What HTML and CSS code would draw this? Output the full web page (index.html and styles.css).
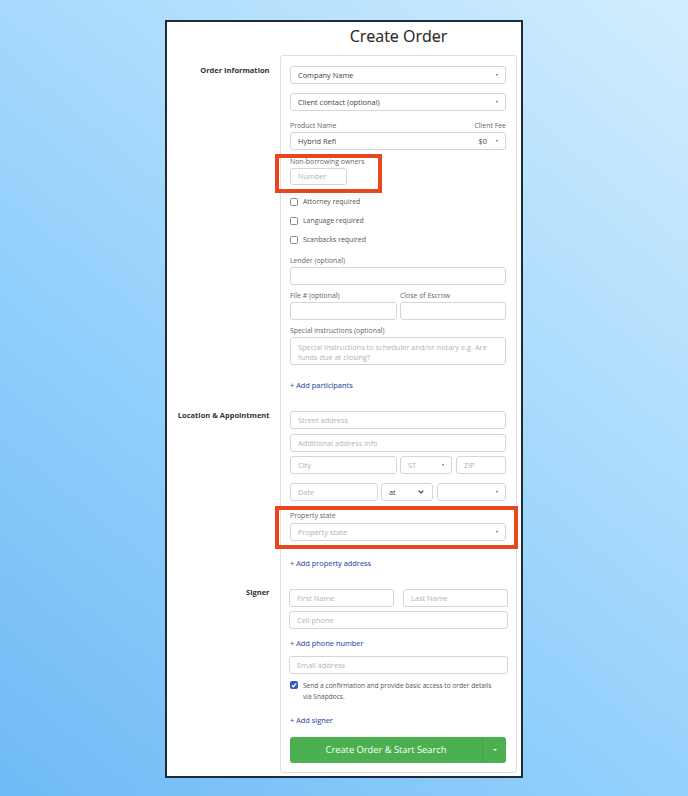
FILE: index.html
```html
<!DOCTYPE html>
<html lang="en">
<head>
<meta charset="utf-8">
<title>Create Order</title>
<link rel="stylesheet" href="styles.css">
</head>
<body>
<div class="frame">
  <div class="title">Create Order</div>
  <div class="layout">
    <div class="side">
      <div class="side-label l1">Order Information</div>
      <div class="side-label l2">Location &amp; Appointment</div>
      <div class="side-label l3">Signer</div>
    </div>
    <div class="card">
      <div class="ctl sel"><span>Company Name</span><i class="caret"></i></div>
      <div class="ctl sel m9"><span>Client contact (optional)</span><i class="caret"></i></div>
      <div class="lbl-row m10"><span class="lbl-txt">Product Name</span><span class="lbl-txt">Client Fee</span></div>
      <div class="ctl sel m1"><span>Hybrid Refi</span><span class="fee">$0<i class="caret"></i></span></div>

      <div class="hl hl1">
        <div class="lbl">Non-borrowing owners</div>
        <div class="ctl ph num">Number</div>
      </div>

      <div class="check first"><i class="box"></i>Attorney required</div>
      <div class="check"><i class="box"></i>Language required</div>
      <div class="check"><i class="box"></i>Scanbacks required</div>

      <div class="lbl m11">Lender (optional)</div>
      <div class="ctl m1"></div>

      <div class="lbl-pair m6"><span class="w107">File # (optional)</span><span>Close of Escrow</span></div>
      <div class="row m1">
        <div class="ctl w107"></div>
        <div class="ctl grow"></div>
      </div>

      <div class="lbl m6">Special instructions (optional)</div>
      <div class="ctl area ph m1">Special instructions to scheduler and/or notary e.g. Are funds due at closing?</div>

      <div class="link m15">+ Add participants</div>

      <div class="ctl ph m21">Street address</div>
      <div class="ctl ph m5">Additional address info</div>
      <div class="row m4">
        <div class="ctl ph w107">City</div>
        <div class="ctl sel ph w52"><span>ST</span><i class="caret"></i></div>
        <div class="ctl ph grow">ZIP</div>
      </div>
      <div class="row m9">
        <div class="ctl ph w88">Date</div>
        <div class="ctl sel w52 at"><span>at</span>
          <svg class="chev" width="6" height="4" viewBox="0 0 6 4"><path d="M0.6 0.6 L3 3 L5.4 0.6" fill="none" stroke="#444" stroke-width="1.2"/></svg>
        </div>
        <div class="ctl sel grow"><span></span><i class="caret"></i></div>
      </div>

      <div class="hl hl2">
        <div class="lbl">Property state</div>
        <div class="ctl sel ph ps"><span>Property state</span><i class="caret"></i></div>
      </div>

      <div class="link m9">+ Add property address</div>

      <div class="signer">
        <div class="row m21">
          <div class="ctl ph w105">First Name</div>
          <div class="ctl ph grow">Last Name</div>
        </div>
        <div class="ctl ph m4">Cell phone</div>
      </div>

      <div class="link m9">+ Add phone number</div>

      <div class="signer">
        <div class="ctl ph m8">Email address</div>
      </div>

      <div class="consent">
        <i class="box on"><svg width="8" height="8" viewBox="0 0 8 8"><path d="M1.8 4.2 L3.4 5.7 L6.3 2.4" fill="none" stroke="#fff" stroke-width="1.3"/></svg></i>
        <span>Send a confirmation and provide basic access to order details<br>via Snapdocs.</span>
      </div>

      <div class="link m13">+ Add signer</div>

      <div class="btn">
        <span class="btn-main">Create Order &amp; Start Search</span>
        <span class="btn-drop"><i class="caret white"></i></span>
      </div>
    </div>
  </div>
</div>
</body>
</html>
```

FILE: styles.css
```css
* { box-sizing: border-box; }

html, body {
  margin: 0;
  padding: 0;
}

body {
  width: 688px;
  height: 796px;
  overflow: hidden;
  font-family: "Open Sans", "Liberation Sans", sans-serif;
  background: linear-gradient(40deg, #6fbaf5 0%, #93d0fc 40%, #b3dffd 70%, #d2edfd 100%);
  padding-top: 20px;
  padding-left: 165px;
}

.frame {
  width: 358px;
  height: 758px;
  background: #fff;
  border: 2px solid #1e2c3a;
}

.title {
  margin-left: 113px;
  width: 237px;
  padding-top: 4px;
  height: 24px;
  line-height: 20px;
  font-size: 16px;
  color: #2a2a2a;
  text-align: center;
  margin-bottom: 9px;
  -webkit-text-stroke: 0.15px #2a2a2a;
}

.layout {
  display: flex;
  gap: 10px;
}

.side {
  width: 103px;
  display: flex;
  flex-direction: column;
  align-items: flex-end;
  padding-right: 0.5px;
}

.side-label {
  font-size: 7.5px;
  font-weight: bold;
  line-height: 10px;
  color: #333;
  white-space: nowrap;
}
.l1 { margin-top: 10px; }
.l2 { margin-top: 335px; }
.l3 { margin-top: 167px; }

.card {
  width: 237px;
  height: 718px;
  border: 1px solid #dedede;
  border-radius: 3px;
  box-shadow: 0 0 2px rgba(0,0,0,0.06);
  padding: 10px 10px 9px 9px;
  display: flex;
  flex-direction: column;
}

.ctl {
  height: 18px;
  border: 1px solid #d6d6d6;
  border-radius: 3px;
  background: #fff;
  font-size: 7.4px;
  line-height: 16px;
  color: #444;
  padding: 0 7px;
  white-space: nowrap;
  overflow: hidden;
  flex-shrink: 0;
}
.ph { color: #b3b3b3; }

.sel {
  display: flex;
  justify-content: space-between;
  align-items: center;
}

.caret {
  display: inline-block;
  width: 0;
  height: 0;
  border-left: 1.5px solid transparent;
  border-right: 1.5px solid transparent;
  border-top: 2.5px solid #666;
}
.caret.white { border-top-color: #fff; border-left-width: 2px; border-right-width: 2px; border-top-width: 2.5px; }

.fee {
  display: flex;
  align-items: center;
  gap: 9px;
}

.m1 { margin-top: 1px; }
.m4 { margin-top: 4px; }
.m5 { margin-top: 5px; }
.m6 { margin-top: 6px; }
.m8 { margin-top: 8px; }
.m9 { margin-top: 9px; }
.m10 { margin-top: 10px; }
.m11 { margin-top: 11px; }
.m13 { margin-top: 13px; }
.m15 { margin-top: 15px; }
.m21 { margin-top: 21px; }

.lbl, .lbl-row, .lbl-pair {
  font-size: 6.9px;
  line-height: 10px;
  height: 10px;
  color: #666;
  white-space: nowrap;
  flex-shrink: 0;
}
.lbl-txt { color: #666; }
.lbl-row {
  display: flex;
  justify-content: space-between;
}
.lbl-pair {
  display: flex;
  gap: 3px;
}

.hl {
  border: 4px solid #e8461f;
  margin-left: -15px;
  padding-left: 11px;
  flex-shrink: 0;
}
.hl .lbl { line-height: 8px; height: 8px; }
.hl1 {
  width: 107px;
  height: 39px;
  margin-top: 4px;
  padding-top: 0;
}
.hl1 .num {
  width: 57px;
  height: 17px;
  margin-top: 2px;
  line-height: 15px;
}
.hl2 {
  width: 243px;
  height: 43px;
  margin-top: 5px;
  padding-top: 2px;
}
.hl2 .ps {
  width: 216px;
  margin-top: 3px;
}

.check {
  display: flex;
  align-items: center;
  gap: 5px;
  font-size: 6.9px;
  line-height: 10px;
  height: 10px;
  color: #555;
  margin-top: 9px;
  flex-shrink: 0;
}
.check.first { margin-top: 4px; }

.box {
  display: inline-flex;
  width: 8px;
  height: 8px;
  border: 1px solid #8a8a8a;
  border-radius: 1.5px;
  background: #fff;
  flex-shrink: 0;
}
.box.on {
  background: #3559c9;
  border-color: #3559c9;
  align-items: center;
  justify-content: center;
}
.box.on svg { display: block; margin: -1px; }

.row {
  display: flex;
  gap: 3px;
  flex-shrink: 0;
}
.w107 { width: 107px; flex-shrink: 0; }
.w105 { width: 105px; flex-shrink: 0; }
.w52 { width: 52px; }
.w88 { width: 88px; }
.grow { flex: 1; }
.row .ctl + .ctl + .ctl { margin-left: 1px; }

.area {
  height: 28px;
  white-space: normal;
  line-height: 10px;
  padding-top: 4px;
  padding-right: 6px;
}

.at { color: #444; padding-right: 8px; }
.chev { display: block; }

.link {
  font-size: 7.4px;
  line-height: 10px;
  height: 10px;
  color: #3454a6;
  flex-shrink: 0;
  -webkit-text-stroke: 0.1px #3454a6;
}

.signer {
  margin-left: -1px;
  margin-right: -2px;
  display: flex;
  flex-direction: column;
}
.signer .row { gap: 9px; }

.consent {
  display: flex;
  gap: 5px;
  margin-top: 6px;
  font-size: 6.6px;
  line-height: 11px;
  color: #555;
  flex-shrink: 0;
}
.consent .box { margin-top: 1px; }

.btn {
  margin-top: 12px;
  height: 26px;
  display: flex;
  border-radius: 3px;
  background: #4caf50;
  color: #fff;
  overflow: hidden;
  flex-shrink: 0;
}
.btn-main {
  flex: 1;
  text-align: center;
  font-size: 9.3px;
  line-height: 26px;
}
.btn-drop {
  width: 24px;
  border-left: 1px solid #45a449;
  display: flex;
  align-items: center;
  justify-content: center;
}
```
